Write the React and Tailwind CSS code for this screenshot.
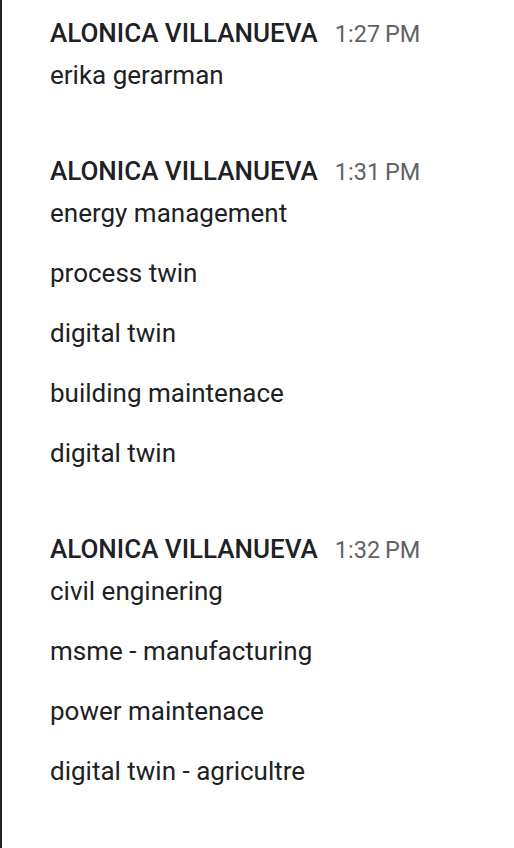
const groups = [
  { time: '1:27 PM', messages: ['erika gerarman'] },
  { time: '1:31 PM', messages: ['energy management', 'process twin', 'digital twin', 'building maintenace', 'digital twin'] },
  { time: '1:32 PM', messages: ['civil enginering', 'msme - manufacturing', 'power maintenace', 'digital twin - agricultre'] },
]

export default function App() {
  return (
    <div className="min-h-[848px] bg-white border-l-2 border-[#202124] pl-[48px] pt-[21px] font-['Roboto',sans-serif]">
      {groups.map((g, i) => (
        <div key={i} className="mb-[54px]">
          {/* sender + time */}
          <div className="flex items-baseline gap-[17px] h-[24px] leading-[24px]">
            <span className="text-[26px] font-medium text-[#202124]">ALONICA VILLANUEVA</span>
            <span className="text-[23.5px] text-[#5f6368] [word-spacing:-1px]">{g.time}</span>
          </div>
          {g.messages.map((m, j) => (
            <div key={j} className="h-[60px] flex items-center text-[26px] text-[#202124]">{m}</div>
          ))}
        </div>
      ))}
    </div>
  )
}
